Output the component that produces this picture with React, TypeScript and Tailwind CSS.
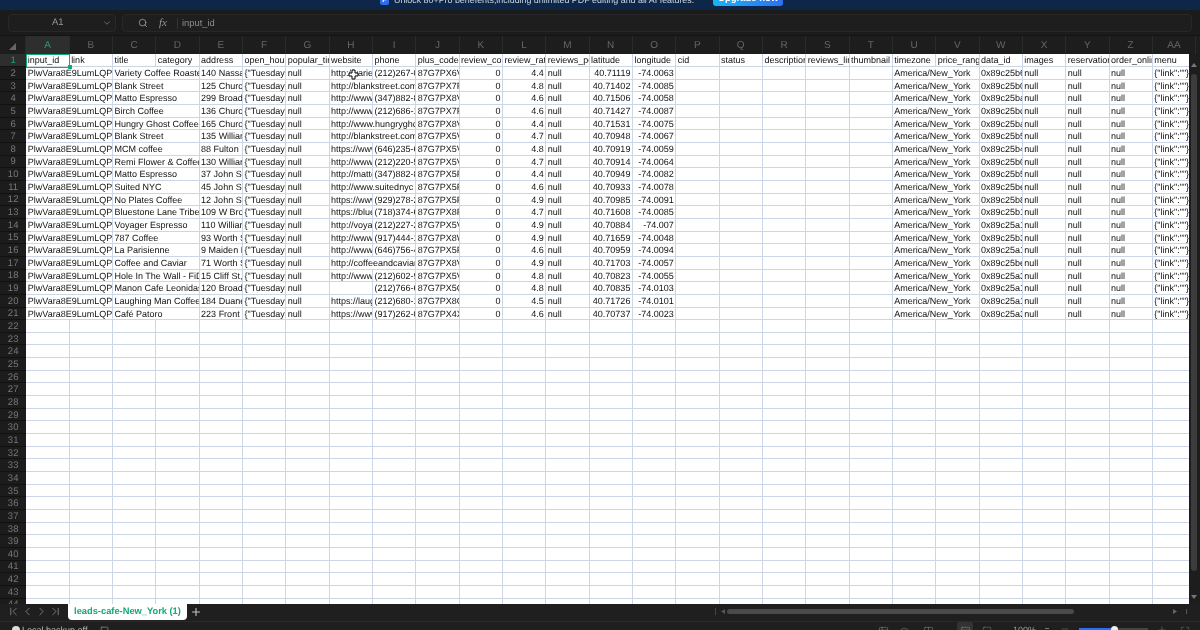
import { ChevronDown, ChevronLeft, ChevronRight, ChevronFirst, ChevronLast, Plus, Search, Table2, Eye, Columns2, Minus, Maximize, PanelTop, Square } from "lucide-react";

const FONT = "font-['Liberation_Sans',Arial,sans-serif] [text-rendering:geometricPrecision]";
const letters = ["A","B","C","D","E","F","G","H","I","J","K","L","M","N","O","P","Q","R","S","T","U","V","W","X","Y","Z","AA"];
const heads = ["input_id","link","title","category","address","open_hours","popular_times","website","phone","plus_code","review_count","review_rating","reviews_per_score","latitude","longitude","cid","status","description","reviews_link","thumbnail","timezone","price_range","data_id","images","reservations","order_online","menu"];

type R = [string, string, string, string, string, string, string, number, string, string];
const data: R[] = [
  ["Variety Coffee Roasters","140 Nassau St","http://varietycoffee.com","(212)267-0000","87G7PX6V+FF","0x89c25b6f2","4.4",0,"40.71119","-74.0063"],
  ["Blank Street","125 Church St","http://blankstreet.com","","87G7PX7R+JH","0x89c25b0a2","4.8",0,"40.71402","-74.0085"],
  ["Matto Espresso","299 Broadway","http://www.mattoespresso.com","(347)882-8000","87G7PX8V+2M","0x89c25ba12","4.6",0,"40.71506","-74.0058"],
  ["Birch Coffee","136 Church St","http://www.birchcoffee.com","(212)686-1000","87G7PX7R+PG","0x89c25bc12","4.6",0,"40.71427","-74.0087"],
  ["Hungry Ghost Coffee","165 Church St","http://www.hungryghostcoffee.com","","87G7PX8V+4X","0x89c25ba32","4.4",0,"40.71531","-74.0075"],
  ["Blank Street","135 William St","http://blankstreet.com","","87G7PX5V+QQ","0x89c25b5a2","4.7",0,"40.70948","-74.0067"],
  ["MCM coffee","88 Fulton St","https://www.mcm.com","(646)235-6000","87G7PX5V+MJ","0x89c25b4a2","4.8",0,"40.70919","-74.0059"],
  ["Remi Flower & Coffee","130 William St","http://www.remi.com","(212)220-5000","87G7PX5V+JF","0x89c25b0a2","4.7",0,"40.70914","-74.0064"],
  ["Matto Espresso","37 John St","http://matto.com","(347)882-8000","87G7PX5R+QP","0x89c25b5a2","4.4",0,"40.70949","-74.0082"],
  ["Suited NYC","45 John St","http://www.suitednyc","","87G7PX5R+PV","0x89c25bea2","4.6",0,"40.70933","-74.0078"],
  ["No Plates Coffee","12 John St","https://www.noplates.com","(929)278-2000","87G7PX5R+WC","0x89c25b8a2","4.9",0,"40.70985","-74.0091"],
  ["Bluestone Lane Tribeca","109 W Broadway","https://bluestonelane.com","(718)374-6000","87G7PX8R+CJ","0x89c25b1a2","4.7",0,"40.71608","-74.0085"],
  ["Voyager Espresso","110 William St","http://voyager.com","(212)227-2000","87G7PX5V+GP","0x89c25a1a2","4.9",0,"40.70884","-74.007"],
  ["787 Coffee","93 Worth St","http://www.787coffee.com","(917)444-1000","87G7PX8W+J5","0x89c25b3a2","4.9",0,"40.71659","-74.0048"],
  ["La Parisienne","9 Maiden Ln","http://www.laparisienne.com","(646)756-4000","87G7PX5R+RC","0x89c25a1a2","4.6",0,"40.70959","-74.0094"],
  ["Coffee and Caviar","71 Worth St","http://coffeeandcaviar.com","","87G7PX8V+QP","0x89c25bea2","4.9",0,"40.71703","-74.0057"],
  ["Hole In The Wall - FiDi","15 Cliff St,","http://www.hitw.com","(212)602-9000","87G7PX5V+7R","0x89c25a3a2","4.8",0,"40.70823","-74.0055"],
  ["Manon Cafe Leonidas","120 Broadway","","(212)766-6000","87G7PX5C+8V","0x89c25a1a2","4.8",0,"40.70835","-74.0103"],
  ["Laughing Man Coffee","184 Duane St","https://laughingman.com","(212)680-1000","87G7PX8C+WW","0x89c25a1a2","4.5",0,"40.71726","-74.0101"],
  ["Café Patoro","223 Front St","https://www.patoro.com","(917)262-0000","87G7PX4X+X2","0x89c25a3a2","4.6",0,"40.70737","-74.0023"],
];

const cell = "border-r border-b border-[#cdd6e7] overflow-hidden whitespace-nowrap pl-[1.5px] h-[12.67px]";
const rowCls = "grid grid-cols-[repeat(27,43.33px)] h-[12.67px] leading-[13.5px]";

function Row({ d }: { d: R }) {
  const [title, addr, web, phone, plus, dataId, rating, count, lat, lon] = d;
  return (
    <div className={rowCls}>
      <div className={`${cell} col-span-2`}>PlwVara8E9LumLQPgHz2</div>
      <div className={`${cell} col-span-2`}>{title}</div>
      <div className={cell}>{addr}</div>
      <div className={cell}>{'{"Tuesday":["7AM"]}'}</div>
      <div className={cell}>null</div>
      {phone === "" ? (
        <div className={`${cell} col-span-2`}>{web}</div>
      ) : (
        <>
          <div className={cell}>{web}</div>
          <div className={cell}>{phone}</div>
        </>
      )}
      <div className={cell}>{plus}</div>
      <div className={`${cell} text-right pr-[1.5px]`}>{count}</div>
      <div className={`${cell} text-right pr-[1.5px]`}>{rating}</div>
      <div className={cell}>null</div>
      <div className={`${cell} text-right pr-[1.5px]`}>{lat}</div>
      <div className={`${cell} text-right pr-[1.5px]`}>{lon}</div>
      <div className={cell} />
      <div className={cell} />
      <div className={cell} />
      <div className={cell} />
      <div className={cell} />
      <div className={`${cell} col-span-2`}>America/New_York</div>
      <div className={cell}>{dataId}</div>
      <div className={cell}>null</div>
      <div className={cell}>null</div>
      <div className={cell}>null</div>
      <div className={cell}>{'{"link":""}'}</div>
    </div>
  );
}

const rowNums = Array.from({ length: 44 }, (_, i) => i + 1);
const emptyRows = Array.from({ length: 23 }, (_, i) => i);

export default function App() {
  return (
    <div className={`${FONT} w-[1200px] h-[630px] overflow-hidden bg-[#1e1e1e] flex flex-col blur-[0.4px]`}>
      {/* banner */}
      <div className="h-[10px] shrink-0 bg-[#0e2748] flex items-end gap-[19px] overflow-hidden pl-[380px]">
        <div className="flex items-end gap-[5px] pb-[5px]">
          <div className="w-[9px] h-[9px] rounded-[2px] bg-[#2f6bf0] flex items-center justify-center text-white text-[7px] font-bold leading-[9px]">F</div>
          <span className="text-[8.9px] leading-[12px] text-[#c9d3e2] -mb-[1px]">Unlock 80+Pro benefents,including unlimited PDF editing and all AI features.</span>
        </div>
        <div className="w-[70px] h-[14px] mb-[4px] shrink-0 rounded-[3px] bg-gradient-to-r from-[#19b4f5] to-[#2d6ff2] text-white text-[9.5px] font-bold leading-[14px] text-center">Upgrade now</div>
      </div>
      {/* formula toolbar */}
      <div className="h-[26px] shrink-0 bg-[#1b1b1b] flex items-center gap-[6px] pl-[8px] pr-[8px] pt-[1px] border-b border-[#141414]">
        <div className="w-[108px] h-[18px] rounded-[4px] border border-[#282828] bg-[#1e1e1e] flex items-center justify-between pl-[43px] pr-[3px] text-[9.5px] text-[#9a9a9a]">
          <span>A1</span>
          <ChevronDown size={10} className="text-[#777]" />
        </div>
        <div className="flex-1 h-[18px] rounded-[4px] border border-[#282828] bg-[#1e1e1e] flex items-center pl-[15px] text-[9.4px] text-[#8d8d8d]">
          <Search size={10} className="text-[#9a9a9a]" />
          <span className="ml-[11px] font-['Liberation_Serif',serif] italic text-[11px] text-[#9a9a9a]">fx</span>
          <span className="ml-[10px] w-px h-[11px] bg-[#333]" />
          <span className="ml-[4px]">input_id</span>
        </div>
      </div>
      {/* column headers */}
      <div className="h-[18.4px] shrink-0 flex bg-[#1d1d1d]">
        <div className="w-[26.3px] shrink-0 flex items-end justify-center pb-[4px] border-r border-[#2a2a2a]">
          <svg width="7" height="7" viewBox="0 0 7 7"><polygon points="7,0 7,7 0,7" fill="#666" /></svg>
        </div>
        {letters.map((l, i) => (
          <div
            key={l}
            className={i === 0
              ? "w-[43.33px] shrink-0 flex items-center justify-center text-[10px] text-[#14a874] bg-[#2e2e2e] border-r border-[#2a2a2a]"
              : "w-[43.33px] shrink-0 flex items-center justify-center text-[10px] text-[#666] border-r border-[#2a2a2a]"}
          >
            {l}
          </div>
        ))}
      </div>
      {/* sheet body */}
      <div className="h-[549.6px] shrink-0 flex overflow-hidden">
        <div className="w-[26.3px] shrink-0 bg-[#1c1c1c]">
          {rowNums.map((n) => (
            <div
              key={n}
              className={n === 1
                ? "h-[12.67px] pt-[1px] flex items-center justify-center text-[9.5px] leading-[11px] text-[#14a874] bg-[#2e2e2e] border-b border-[#111]"
                : "h-[12.67px] pt-[1px] flex items-center justify-center text-[9.5px] leading-[11px] text-[#777] border-b border-[#111]"}
            >
              {n}
            </div>
          ))}
        </div>
        <div className="relative w-[1162.7px] shrink-0 bg-white overflow-hidden text-[9px] text-[#111]">
          <div className={rowCls}>
            {heads.map((h) => (
              <div key={h} className={cell}>{h}</div>
            ))}
          </div>
          {data.map((d, i) => (
            <Row key={i} d={d} />
          ))}
          {emptyRows.map((r) => (
            <div key={r} className={rowCls}>
              {letters.map((l) => (
                <div key={l} className={cell} />
              ))}
            </div>
          ))}
          {/* selection */}
          <div className="absolute left-0 top-0 w-[44px] h-[13.4px] border-[1.5px] border-[#14a874]" />
          <div className="absolute left-[41.5px] top-[11px] w-[4px] h-[4px] bg-[#14a874] border border-[#14a874]" />
          {/* cursor */}
          <svg className="absolute left-[322px] top-[15px]" width="11" height="11" viewBox="0 0 11 11">
            <path d="M4 1h3v3h3v3H7v3H4V7H1V4h3z" fill="#fff" stroke="#000" strokeWidth="1" />
          </svg>
        </div>
        <div className="flex-1 bg-[#1d1d1d] flex flex-col items-center pt-[9px]">
          <svg width="6" height="4" viewBox="0 0 6 4"><polygon points="3,0 6,4 0,4" fill="#777" /></svg>
          <div className="w-[6px] h-[497px] mt-[7px] rounded-[3px] bg-[#3c3c3c]" />
          <svg className="mt-[24px]" width="6" height="4" viewBox="0 0 6 4"><polygon points="0,0 6,0 3,4" fill="#777" /></svg>
        </div>
      </div>
      {/* tabs */}
      <div className="h-[17px] shrink-0 bg-[#1f1f1f] flex items-start">
        <div className="w-[68px] h-[15px] flex items-center pl-[7px] gap-[1px] text-[#8a8a8a] shrink-0">
          <ChevronFirst size={13} strokeWidth={1.5} />
          <ChevronLeft size={13} strokeWidth={1.5} />
          <ChevronRight size={13} strokeWidth={1.5} />
          <ChevronLast size={13} strokeWidth={1.5} />
        </div>
        <div className="w-[119px] h-[16px] bg-white rounded-b-[4px] text-center text-[#14a874] font-bold text-[9.3px] leading-[15px] shrink-0">leads-cafe-New_York (1)</div>
        <Plus size={12} strokeWidth={2.2} className="text-[#c4c4c4] ml-[3px] mt-[2px] shrink-0" />
        <div className="ml-auto flex items-center h-[15px]">
          <span className="w-px h-[7px] bg-[#444]" />
          <svg className="ml-[5px]" width="4" height="5" viewBox="0 0 4 5"><polygon points="4,0 4,5 0,2.5" fill="#555" /></svg>
          <div className="ml-[2px] w-[347px] h-[5px] rounded-[3px] bg-[#4a4a4a]" />
          <svg className="ml-[99px]" width="4" height="5" viewBox="0 0 4 5"><polygon points="0,0 0,5 4,2.5" fill="#666" /></svg>
          <span className="ml-[9px] w-px h-[5px] bg-[#555]" />
          <span className="w-[13px]" />
        </div>
      </div>
      {/* status */}
      <div className="h-[12px] shrink-0 bg-[#1f1f1f] border-t border-[#2a2a2a] flex items-start text-[9px] leading-[11px] text-[#aaa] overflow-hidden">
        <div className="w-[8px] h-[8px] rounded-full bg-[#ddd] ml-[12px] mt-[4px]" />
        <span className="ml-[2px] mt-[3px] text-[#bbb]">Local backup off</span>
        <Square size={9} className="ml-[13px] mt-[4px] text-[#888]" />
        <div className="ml-auto flex items-start text-[#999]">
          <Table2 size={11} strokeWidth={1} className="mt-[4px]" />
          <Eye size={11} strokeWidth={1} className="ml-[10px] mt-[4px]" />
          <Columns2 size={11} strokeWidth={1} className="ml-[13px] mt-[4px]" />
          <div className="ml-[23px] w-[16px] h-[12px] rounded-[2px] bg-[#333] flex justify-center pt-[4px]"><PanelTop size={11} strokeWidth={1} /></div>
          <Square size={10} strokeWidth={1} className="ml-[9px] mt-[4px]" />
          <span className="ml-[21px] mt-[3px] w-[24px] text-[9px]">100%</span>
          <span className="ml-[8px] mt-[6px] w-[4px] h-[1px] bg-[#777]" />
          <Minus size={10} strokeWidth={1} className="ml-[11px] mt-[2px]" />
          <div className="ml-[9px] w-[69px] h-[2px] mt-[6px] bg-[#444] relative">
            <div className="w-[35px] h-[2px] bg-[#2d6ff2]" />
            <div className="absolute left-[32px] -top-[2px] w-[7px] h-[7px] rounded-full bg-[#eee]" />
          </div>
          <Plus size={10} strokeWidth={1} className="ml-[9px] mt-[3px]" />
          <Maximize size={10} strokeWidth={1} className="ml-[13px] mr-[10px] mt-[4px]" />
        </div>
      </div>
    </div>
  );
}
